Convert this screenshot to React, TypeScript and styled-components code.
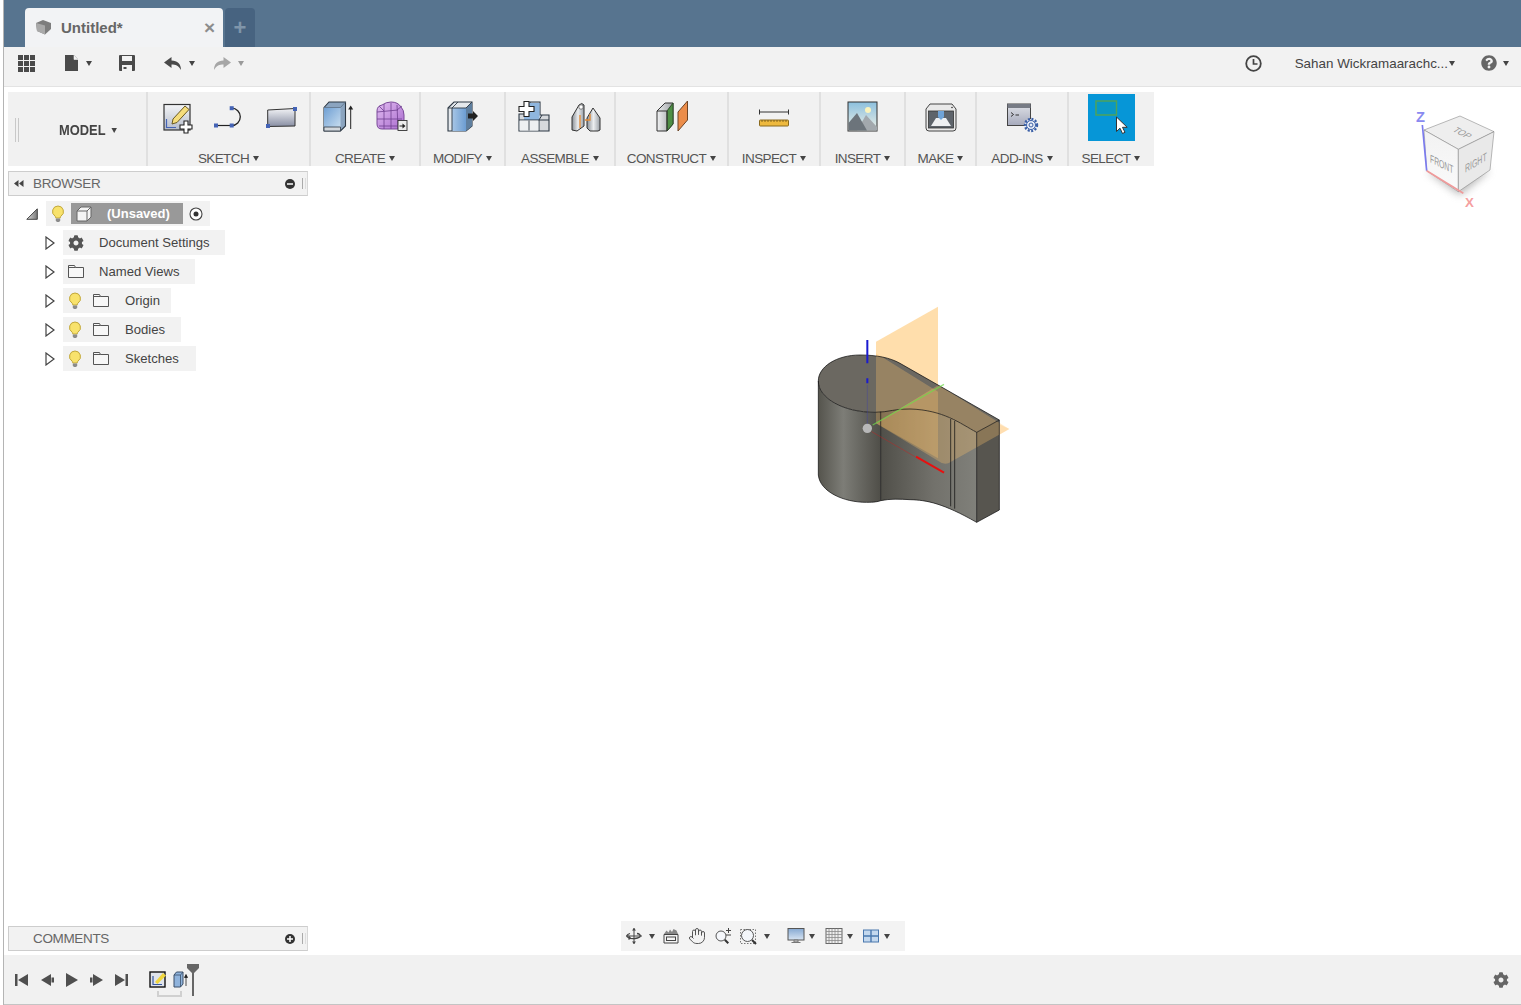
import * as React from 'react';
import styled, { createGlobalStyle } from 'styled-components';
import { FaCog, FaQuestionCircle } from 'react-icons/fa';
import { Hand } from 'lucide-react';

const GlobalStyle = createGlobalStyle`
  html, body {
    margin: 0;
    height: 100%;
    overflow: hidden;
    background: #fff;
    font-family: "Liberation Sans", Arial, sans-serif;
  }
  #root { height: 100%; }
`;

const Page = styled.div`
  display: flex;
  flex-flow: column;
  height: 1005px;
  margin-left: 3px;
  border-left: 1px solid #b4b4b4;
  box-sizing: border-box;
`;

/* title bar */
const TitleBar = styled.div`
  display: flex;
  align-items: flex-end;
  flex-shrink: 0;
  height: 47px;
  padding-left: 21px;
  background-color: #57748f;
`;
const Tab = styled.div`
  display: flex;
  align-items: center;
  width: 198px;
  height: 39px;
  box-sizing: border-box;
  padding: 0 8px 0 10px;
  background-color: #f2f3f5;
  border-radius: 4px 4px 0 0;
`;
const TabTitle = styled.span`
  flex: 1;
  margin-left: 9px;
  font-size: 15px;
  font-weight: bold;
  color: #666;
`;
const TabClose = styled.span`
  font-size: 19px;
  font-weight: bold;
  line-height: 1;
  color: #8c8c8c;
`;
const NewTab = styled.div`
  display: flex;
  align-items: center;
  justify-content: center;
  width: 30px;
  height: 39px;
  margin-left: 2px;
  background-color: #476380;
  border-radius: 4px 4px 0 0;
  color: #7f95aa;
  font-size: 22px;
  font-weight: bold;
`;

/* application bar */
const AppBar = styled.div`
  display: flex;
  align-items: center;
  flex-shrink: 0;
  height: 40px;
  box-sizing: border-box;
  padding: 0 12px 7px 0;
  background-color: #f2f2f2;
  border-bottom: 1px solid #e3e3e3;
`;
const AppItem = styled.div<{ $ml: number }>`
  display: flex;
  align-items: center;
  margin-left: ${({ $ml }) => $ml}px;
`;
const AppSpacer = styled.div`
  flex: 1;
`;
const UserName = styled.span`
  font-size: 13.4px;
  color: #444;
  white-space: nowrap;
`;
const Caret = styled.span<{ $ml?: number; $light?: boolean }>`
  display: inline-block;
  flex-shrink: 0;
  width: 0;
  height: 0;
  margin-left: ${({ $ml }) => $ml ?? 0}px;
  border-left: 3.5px solid transparent;
  border-right: 3.5px solid transparent;
  border-top: 5px solid ${({ $light }) => ($light ? '#9a9a9a' : '#444')};
`;

/* workspace */
const Workspace = styled.div`
  position: relative;
  display: flex;
  flex-flow: column;
  flex: 1;
  min-height: 0;
  padding: 5px 0 4px 4px;
`;
const Toolbar = styled.div`
  display: flex;
  align-self: flex-start;
  height: 74px;
  background-color: #f1f1f1;
`;
const ModelGroup = styled.div`
  display: flex;
  align-items: center;
  box-sizing: border-box;
  width: 140px;
  padding-left: 7px;
  border-right: 2px solid #e0e0e0;
`;
const Grip = styled.div`
  width: 2px;
  height: 24px;
  margin-top: 2px;
  border-left: 1px solid #c8c8c8;
  border-right: 1px solid #c8c8c8;
`;
const ModelLabel = styled.span`
  display: flex;
  align-items: center;
  margin: 2px 0 0 40px;
  font-size: 14px;
  font-weight: bold;
  color: #444;
  transform: scaleX(0.92);
  transform-origin: left center;
`;
const Group = styled.div<{ $w: number; $last?: boolean }>`
  display: flex;
  flex-flow: column;
  align-items: center;
  box-sizing: border-box;
  width: ${({ $w }) => $w}px;
  padding-top: 2px;
  padding-right: ${({ $last }) => ($last ? 1 : 0)}px;
  border-right: ${({ $last }) => ($last ? 'none' : '2px solid #e0e0e0')};
`;
const IconRow = styled.div`
  display: flex;
  justify-content: center;
  height: 47px;
`;
const ToolSlot = styled.div`
  display: flex;
  align-items: center;
  justify-content: center;
  width: 52px;
  height: 47px;
`;
const SelectSlot = styled.div`
  width: 47px;
  height: 47px;
  background-color: #0696d7;
`;
const GroupLabel = styled.div`
  display: flex;
  align-items: center;
  gap: 4px;
  height: 16px;
  margin-top: 9px;
  font-size: 13.5px;
  color: #555;
  letter-spacing: -0.6px;
  white-space: nowrap;
`;

/* browser */
const Panel = styled.div<{ $top?: number }>`
  display: flex;
  align-items: center;
  box-sizing: border-box;
  width: 300px;
  height: 25px;
  margin-top: ${({ $top }) => $top ?? 0}px;
  background-color: #f2f2f2;
  border: 1px solid #cdcdcd;
  border-right-color: #d8d8d8;
`;
const PanelArrows = styled.span`
  width: 24px;
  padding-left: 5px;
  box-sizing: border-box;
  display: flex;
`;
const PanelTitle = styled.span`
  flex: 1;
  padding-bottom: 1px;
  font-size: 13.5px;
  color: #666;
  letter-spacing: -0.35px;
`;
const PanelBar = styled.span`
  width: 2px;
  height: 11px;
  margin: 0 1px 0 7px;
  border-left: 1px solid #aaa;
  border-right: 1px solid #ddd;
`;
const Tree = styled.div`
  display: flex;
  flex-flow: column;
  gap: 4px;
  padding: 5px 0 0 18px;
`;
const RootRow = styled.div`
  display: flex;
  align-items: center;
  height: 25px;
`;
const RootPill = styled.div`
  display: flex;
  align-items: center;
  width: 164px;
  height: 25px;
  margin-left: 8px;
  padding-left: 5px;
  box-sizing: border-box;
  background-color: #f2f2f2;
`;
const RootName = styled.div`
  display: flex;
  align-items: center;
  width: 112px;
  height: 21px;
  margin: 0 6px;
  padding-left: 5px;
  box-sizing: border-box;
  background-color: #999;
  color: #fff;
  font-size: 13px;
  font-weight: bold;
`;
const RootText = styled.span`
  margin-left: 15px;
`;
const Row = styled.div`
  display: flex;
  align-items: center;
  height: 25px;
  padding-left: 19px;
`;
const Pill = styled.div<{ $w: number }>`
  display: flex;
  align-items: center;
  width: ${({ $w }) => $w}px;
  height: 25px;
  margin-left: 8px;
  padding-left: 5px;
  box-sizing: border-box;
  background-color: #f2f2f2;
`;
const RowFolder = styled.span`
  display: flex;
  margin-left: 11px;
`;
const RowLabel = styled.span<{ $ml: number }>`
  margin-left: ${({ $ml }) => $ml}px;
  font-size: 13.1px;
  color: #444;
  white-space: nowrap;
`;
const Footer = styled.div`
  display: flex;
  align-items: flex-end;
  margin-top: auto;
`;
const NavTools = styled.div`
  display: flex;
  align-items: center;
  width: 284px;
  height: 30px;
  margin-left: 313px;
  padding-left: 4px;
  box-sizing: border-box;
  background-color: #f3f3f3;
`;
const NavItem = styled.div<{ $ml: number }>`
  display: flex;
  flex-shrink: 0;
  margin-left: ${({ $ml }) => $ml}px;
`;

/* timeline */
const Timeline = styled.div`
  display: flex;
  align-items: center;
  flex-shrink: 0;
  height: 50px;
  box-sizing: border-box;
  padding-left: 11px;
  background-color: #f1f1f1;
  border-bottom: 1px solid #c4c4c4;
`;
const TimeItem = styled.div<{ $ml: number }>`
  display: flex;
  margin-left: ${({ $ml }) => $ml}px;
`;
const TimeFeatures = styled.div`
  position: relative;
  display: flex;
  gap: 6px;
  margin-left: 20px;

  &::after {
    content: '';
    position: absolute;
    left: 8px;
    bottom: -8px;
    width: 25px;
    height: 6px;
    box-sizing: border-box;
    border: 2px solid #d0d0d0;
    border-top: none;
  }
`;
const TimelineGear = styled.div`
  display: flex;
  margin-left: auto;
  margin-right: 12px;
  color: #666;
`;

/* canvas content */
const ModelView = styled.svg`
  position: absolute;
  left: 796px;
  top: 208px;
  width: 220px;
  height: 240px;
`;
const ViewCube = styled.svg`
  position: absolute;
  left: 1406px;
  top: 18px;
  width: 100px;
  height: 110px;
`;

const Icon = ({ children, s = 36 }: { children: React.ReactNode; s?: number }) => (
  <svg width={s} height={s} viewBox={`0 0 ${s} ${s}`}>
    {children}
  </svg>
);

const Dot = ({ x, y }: { x: number; y: number }) => (
  <rect x={x - 2} y={y - 2} width={4} height={4} fill="#4463b5" />
);

const SketchIcon = () => (
  <Icon>
    <defs>
      <linearGradient id="sk" x1="0" y1="0" x2="0" y2="1">
        <stop offset="0" stopColor="#f4f5f7" />
        <stop offset="1" stopColor="#b4bbca" />
      </linearGradient>
    </defs>
    <rect x="5" y="4.5" width="26" height="25.5" fill="url(#sk)" stroke="#333" strokeWidth="1.2" />
    <path d="M7.500 19v8.500H17" fill="none" stroke="#4463b5" strokeWidth="1.200" />
    <path d="M14 19 26 6l4 3.500L18 22.500l-5 1.500z" fill="#f5dd7c" stroke="#6a5a20" strokeWidth="1" />
    <path d="M25 21h4v4h4v4h-4v4h-4v-4h-4v-4h4z" fill="#fff" stroke="#222" strokeWidth="1.100" />
  </Icon>
);
const LineIcon = () => (
  <Icon>
    <path d="M5 25.500h15.700" stroke="#222" strokeWidth="1.200" fill="none" />
    <path d="M20.700 8.200a8.600 8.650 0 0 1 0 17.300" stroke="#222" strokeWidth="1.300" fill="none" />
    <Dot x={5} y={25.5} />
    <Dot x={20.7} y={25.5} />
    <Dot x={20.7} y={8.2} />
  </Icon>
);
const RectIcon = () => (
  <Icon>
    <defs>
      <linearGradient id="re" x1="0" y1="0" x2="0" y2="1">
        <stop offset="0" stopColor="#f2f3f6" />
        <stop offset="1" stopColor="#888ea3" />
      </linearGradient>
    </defs>
    <path d="M4.700 10 32 8.500V26L4.700 26.500z" fill="url(#re)" stroke="#333" strokeWidth="1" />
    <Dot x={32} y={9} />
    <Dot x={5} y={26} />
  </Icon>
);
const ExtrudeIcon = () => (
  <Icon>
    <defs>
      <linearGradient id="ex" x1="0" y1="0" x2="1" y2="1">
        <stop offset="0" stopColor="#6f9fd3" />
        <stop offset="1" stopColor="#c6dcef" />
      </linearGradient>
    </defs>
    <path d="M3 7.500 8 2h16.500v24l-5 5H3z" fill="#8ba4bf" stroke="#2d3844" strokeWidth="1.100" />
    <path d="M3 7.500h16.500V27H3z" fill="url(#ex)" />
    <path d="M3 7.500h16.500L24.500 2" fill="none" stroke="#5f7287" strokeWidth=".8" />
    <path d="M3 27h16.500V31H3z" fill="#d2d7dc" stroke="#2d3844" strokeWidth=".8" />
    <path d="M29.700 29V7" stroke="#222" strokeWidth="1" />
    <path d="M27.200 9.500l2.500-4 2.500 4z" fill="#222" />
  </Icon>
);
const FormIcon = () => (
  <Icon>
    <defs>
      <linearGradient id="fo" x1="0" y1="0" x2="1" y2="1">
        <stop offset="0" stopColor="#e2bdf1" />
        <stop offset="1" stopColor="#a96bce" />
      </linearGradient>
    </defs>
    <path d="M4 11q0-5 5-6 4-3 9-3 7 0 10 5 3 3 3 8v7q0 5-4 7H9q-5 0-5-5z" fill="url(#fo)" stroke="#7a4a99" strokeWidth="1" />
    <path d="M4 12 25 10M4 19h25M6 26h20M11 4v25M18 3v26M24 5l1 24M6 6l5 5M24 10l5-4" stroke="#6f3f8f" strokeWidth=".8" fill="none" />
    <rect x="25" y="20.500" width="9" height="10" fill="#ececec" stroke="#333" strokeWidth=".9" />
    <path d="M26.500 25.500h3v-2l3 2.500-3 2.500v-2h-3z" fill="#222" />
  </Icon>
);
const ModifyIcon = () => (
  <Icon>
    <defs>
      <linearGradient id="mo" x1="0" y1="0" x2="1" y2="0">
        <stop offset="0" stopColor="#a8c6e6" />
        <stop offset="1" stopColor="#6c9dd2" />
      </linearGradient>
    </defs>
    <path d="M3 8 9 2h18v24l-6 5H3z" fill="#e4e8ec" stroke="#2d3844" strokeWidth="1.100" />
    <path d="M7 8h14v23H7z" fill="url(#mo)" />
    <path d="M21 8l6-6v24l-6 5z" fill="#5f7f9f" />
    <path d="M3 8h4l6-6M7 8v23M7 8h14l6-6" fill="none" stroke="#2d3844" strokeWidth=".9" />
    <path d="M23 13.500h5V11l5 5-5 5v-2.500h-5z" fill="#222" />
  </Icon>
);
const AssembleIcon = () => (
  <Icon>
    <path d="M14 2h10v13h9v16H3V14h11z" fill="#d6d9dd" stroke="#2d3844" strokeWidth="1.100" />
    <rect x="8" y="3" width="15.500" height="17" fill="#8fb6df" />
    <path d="M3 20h20v11M23 20l3-5M23 20h10" stroke="#2d3844" strokeWidth="1" fill="none" />
    <rect x="3.600" y="20.600" width="18.800" height="10" fill="#eef0f2" />
    <path d="M13 20.500v10" stroke="#2d3844" strokeWidth=".9" />
    <path d="M8 1.500h5v5h5v5h-5v5H8v-5H3v-5h5z" fill="#fff" stroke="#222" strokeWidth="1.100" />
  </Icon>
);
const JointIcon = () => (
  <Icon>
    <defs>
      <linearGradient id="jo" x1="0" y1="0" x2="1" y2="0">
        <stop offset="0" stopColor="#8a8f96" />
        <stop offset=".5" stopColor="#eceef0" />
        <stop offset="1" stopColor="#9aa0a7" />
      </linearGradient>
    </defs>
    <path d="M4 30V17l7-12q3-3 5 0v21l-7 5z" fill="url(#jo)" stroke="#333" strokeWidth="1" />
    <path d="M19 18 25 8l7 10v12l-2 1h-8l-3-3z" fill="url(#jo)" stroke="#333" strokeWidth="1" />
    <path d="M12 15v13M22 14v6h-5" stroke="#e58a32" strokeWidth="1.300" fill="none" />
    <circle cx="13" cy="7" r="2.200" fill="#fff" stroke="#555" strokeWidth=".7" />
  </Icon>
);
const ConstructIcon = () => (
  <Icon>
    <defs>
      <linearGradient id="co" x1="0" y1="0" x2="1" y2="0">
        <stop offset="0" stopColor="#f0f1f2" />
        <stop offset="1" stopColor="#9b9fa3" />
      </linearGradient>
    </defs>
    <path d="M3 11 11 3h8v21l-6 7H3z" fill="url(#co)" stroke="#333" strokeWidth="1" />
    <path d="M13 11 19 3v21l-6 7z" fill="#4e8f45" stroke="#2e4c2a" strokeWidth="1" />
    <path d="M3 11h10v20" fill="none" stroke="#333" strokeWidth="1" />
    <path d="M24 12 33.500 1v19L24 31z" fill="#ec8d4a" stroke="#6d4426" strokeWidth="1" />
  </Icon>
);
const InspectIcon = () => (
  <Icon>
    <path d="M3.500 12h29M3.500 9.500v5M32.500 9.500v5" stroke="#333" strokeWidth="1" fill="none" />
    <rect x="3.500" y="20" width="29" height="6" rx=".8" fill="#eeb93e" stroke="#8a6a1e" strokeWidth="1" />
    <path d="M6 20v2M9 20v2M12 20v2M15 20v2M18 20v2M21 20v2M24 20v2M27 20v2M30 20v2" stroke="#6d5416" strokeWidth=".8" />
  </Icon>
);
const InsertIcon = () => (
  <Icon>
    <defs>
      <linearGradient id="in" x1="0" y1="0" x2="0" y2="1">
        <stop offset="0" stopColor="#8cc0de" />
        <stop offset="1" stopColor="#eef0e6" />
      </linearGradient>
    </defs>
    <rect x="3" y="2" width="29" height="29" fill="url(#in)" stroke="#333" strokeWidth="1" />
    <circle cx="23" cy="10" r="3" fill="#fbf4bd" />
    <path d="M21 15l11 12v3.500H12z" fill="#a2a8ad" />
    <path d="M3.500 23 12 13 22 30.500H3.500z" fill="#6c747b" />
  </Icon>
);
const MakeIcon = () => (
  <Icon>
    <path d="M3 9 7 4h22l4 5v19q0 3-3 3H6q-3 0-3-3z" fill="#e9e9e9" stroke="#444" strokeWidth="1" />
    <rect x="5.500" y="11" width="25" height="17" fill="#5e646b" stroke="#333" strokeWidth=".8" />
    <path d="M8 26 13 18h10l5 8z" fill="#eef0f2" />
    <path d="M15 11h6v6l-3 3-3-3z" fill="#6fa3d7" />
    <circle cx="29" cy="7.500" r=".8" fill="#333" />
  </Icon>
);
const AddInsIcon = () => (
  <Icon>
    <defs>
      <linearGradient id="ad" x1="0" y1="0" x2="0" y2="1">
        <stop offset="0" stopColor="#dfe1e7" />
        <stop offset="1" stopColor="#a6aabc" />
      </linearGradient>
    </defs>
    <rect x="3.500" y="4" width="23" height="21.500" fill="url(#ad)" stroke="#444" strokeWidth="1" />
    <rect x="3.500" y="4" width="23" height="4" fill="#777b85" />
    <path d="M7 12.500l2.500 2-2.500 2M11.500 15h3.500" stroke="#222" strokeWidth=".9" fill="none" />
    <circle cx="27" cy="25" r="6" fill="#e9eef8" stroke="#3a5fa6" strokeWidth="2.400" strokeDasharray="2 1.500" />
    <circle cx="27" cy="25" r="4.500" fill="#e9eef8" stroke="#3a5fa6" strokeWidth="1" />
    <circle cx="27" cy="25" r="2" fill="none" stroke="#3a5fa6" strokeWidth="1" />
  </Icon>
);
const SelectIcon = () => (
  <svg width={47} height={47} viewBox="0 0 47 47">
    <rect x="8" y="7" width="20.500" height="14" fill="#0a97c4" stroke="#4ea35a" strokeWidth="1.500" />
    <path d="M28.500 23v14.500l3.500-3.300 2.500 5.300 2.500-1.200-2.500-5h4.700z" fill="#fff" stroke="#333" strokeWidth="1" />
  </svg>
);

const Bulb = () => (
  <svg width={14} height={18} viewBox="0 0 14 18">
    <path d="M7 1a5.500 5.500 0 0 0-3 10.100c.6.500.8 1 .8 1.900h4.400c0-.9.200-1.400.8-1.900A5.500 5.500 0 0 0 7 1z" fill="#f8e26c" stroke="#c2a83a" strokeWidth="1" />
    <path d="M4.800 13.500h4.400v2l-1 1.500H5.800l-1-1.500z" fill="#8b8b8b" />
  </svg>
);
const Folder = () => (
  <svg width={16} height={13} viewBox="0 0 16 13">
    <path d="M.500 12.500V.500h6l1 2h8v10z M.500 2.500h7" fill="#f7f7f7" stroke="#555" strokeWidth="1" />
  </svg>
);
const Expand = () => (
  <svg width={10} height={14} viewBox="0 0 10 14">
    <path d="M1 1v12l8-6z" fill="#fff" stroke="#444" strokeWidth="1.200" />
  </svg>
);
const Collapse = () => (
  <svg width={12} height={12} viewBox="0 0 12 12">
    <defs>
      <linearGradient id="col" x1="0" y1="0" x2="1" y2="0">
        <stop offset="0" stopColor="#ddd" />
        <stop offset="1" stopColor="#777" />
      </linearGradient>
    </defs>
    <path d="M.800 11.300 11.300.800v10.500z" fill="url(#col)" stroke="#444" strokeWidth="1" />
  </svg>
);
const Rewind = () => (
  <svg width={10} height={7} viewBox="0 0 10 7">
    <path d="M0 3.500 4.500 0v7zM5 3.500 9.500 0v7z" fill="#444" />
  </svg>
);
const RoundMark = ({ plus }: { plus?: boolean }) => (
  <svg width={10} height={10} viewBox="0 0 10 10">
    <circle cx="5" cy="5" r="5" fill="#333" />
    <path d={plus ? 'M2 5h6M5 2v6' : 'M2 5h6'} stroke="#fff" strokeWidth="1.500" />
  </svg>
);

const AppsIcon = () => (
  <svg width={17} height={17} viewBox="0 0 17 17" fill="#4a4a4a">
    {[0, 6, 12].map(y =>
      [0, 6, 12].map(x => <rect key={`${x}-${y}`} x={x} y={y} width={5} height={5} />)
    )}
  </svg>
);
const FileIcon = () => (
  <svg width={14} height={16} viewBox="0 0 14 16">
    <path d="M0 0h9l4 4.500V16H0z" fill="#4a4a4a" />
    <path d="M9 0v4.500h4" fill="#f2f2f2" stroke="#f2f2f2" strokeWidth=".6" />
  </svg>
);
const SaveIcon = () => (
  <svg width={16} height={16} viewBox="0 0 16 16">
    <path d="M0 1q0-1 1-1h14q1 0 1 1v14q0 1-1 1H1q-1 0-1-1z" fill="#4a4a4a" />
    <rect x="3" y="1" width="10" height="5" fill="#f2f2f2" />
    <rect x="3" y="10" width="10" height="6" fill="#f2f2f2" />
    <rect x="4.500" y="12" width="3" height="2" fill="#4a4a4a" />
  </svg>
);
const UndoIcon = ({ redo }: { redo?: boolean }) => (
  <svg width={18} height={13} viewBox="0 0 18 13">
    <path
      d="M7.500 0 0 5.500 7.500 11V7.500c4 0 7 .8 9.500 5.500 0-6-3.500-9.500-9.500-9.500z"
      fill={redo ? '#a6a6a6' : '#4a4a4a'}
      transform={redo ? 'matrix(-1 0 0 1 18 0)' : undefined}
    />
  </svg>
);
const ClockIcon = () => (
  <svg width={17} height={17} viewBox="0 0 17 17">
    <circle cx="8.500" cy="8.500" r="7.300" fill="none" stroke="#444" strokeWidth="1.800" />
    <path d="M8.500 4v5h4" fill="none" stroke="#444" strokeWidth="1.700" />
  </svg>
);
const TabCube = () => (
  <svg width={17} height={15} viewBox="0 0 17 15">
    <path d="M1 3 8 0l8 3v6l-6 5.500L2 11z" fill="#7d7d7d" />
    <path d="M1 3 10 5.500v9L2 11z" fill="#a9a9a9" />
  </svg>
);
const RootCube = () => (
  <svg width={16} height={16} viewBox="0 0 16 16">
    <path d="M1 5 5 1h10v10l-4 4H1z" fill="#f4f4f4" stroke="#666" strokeWidth="1" />
    <path d="M1 5h10v10M11 5l4-4" fill="none" stroke="#666" strokeWidth="1" />
  </svg>
);
const Target = () => (
  <svg width={14} height={14} viewBox="0 0 14 14">
    <circle cx="7" cy="7" r="6" fill="#fff" stroke="#444" strokeWidth="1.100" />
    <circle cx="7" cy="7" r="2.500" fill="#333" />
  </svg>
);

const OrbitIcon = () => (
  <svg width={18} height={18} viewBox="0 0 18 18">
    <path d="M9 1v16M1 9h16" stroke="#444" strokeWidth="1" />
    <path d="M7 3.500 9 1l2 2.500zM7 14.500 9 17l2-2.500z" fill="#444" />
    <path d="M12 6.500c4 .5 4.500 3.500.5 4.500-3 .8-7 .8-9-.3C1 9.500 1.500 7.500 5 6.500" fill="none" stroke="#444" strokeWidth="1.300" />
    <path d="M3.500 8v5l3-1.500z" fill="#444" />
  </svg>
);
const LookIcon = () => (
  <svg width={18} height={18} viewBox="0 0 18 18">
    <path d="M2 7.500h14V16H2z" fill="#f4f4f4" stroke="#444" strokeWidth="1" />
    <rect x="4.500" y="10" width="9" height="3.500" fill="none" stroke="#444" strokeWidth="1" />
    <path d="M2 7 4.500 3.500l2 2 1.500-3 2 2.500 1.500-3 3 1.500L16 7z" fill="#888" />
  </svg>
);
const ZoomIcon = () => (
  <svg width={18} height={18} viewBox="0 0 18 18">
    <circle cx="7" cy="9" r="5" fill="#f5f7fb" stroke="#555" strokeWidth="1" />
    <path d="m10.800 12.800 3.500 3.500" stroke="#333" strokeWidth="2" />
    <path d="M12 3.500h5M14.500 1v5M12 8h5" stroke="#444" strokeWidth="1" />
  </svg>
);
const FitIcon = () => (
  <svg width={18} height={18} viewBox="0 0 18 18">
    <path d="M.500 2.500h15v14H.500z" fill="none" stroke="#777" strokeWidth="1" strokeDasharray="1.500 1.500" />
    <circle cx="7.500" cy="8.500" r="6" fill="#f3f6fa" stroke="#555" strokeWidth="1" />
    <path d="m12 13 4 4" stroke="#333" strokeWidth="2" />
  </svg>
);
const DisplayIcon = () => (
  <svg width={18} height={18} viewBox="0 0 18 18">
    <defs>
      <linearGradient id="di" x1="0" y1="0" x2="0" y2="1">
        <stop offset="0" stopColor="#86a9d2" />
        <stop offset="1" stopColor="#d7e4f2" />
      </linearGradient>
    </defs>
    <rect x="1" y="1.500" width="16" height="11.500" fill="url(#di)" stroke="#555" strokeWidth="1" />
    <path d="M7 13h4v2H7zM4.500 15.500h9" stroke="#777" strokeWidth="1" fill="#ccc" />
  </svg>
);
const GridIcon = () => (
  <svg width={18} height={18} viewBox="0 0 18 18">
    <rect x="1" y="1.500" width="16" height="15" fill="#eee" stroke="#666" strokeWidth="1" />
    <path d="M4 1.500v15M7 1.500v15M10 1.500v15M13 1.500v15M1 4.500h16M1 7.500h16M1 10.500h16M1 13.500h16" stroke="#8a8a8a" strokeWidth=".8" />
  </svg>
);
const ViewportIcon = () => (
  <svg width={18} height={18} viewBox="0 0 18 18">
    <rect x="1.500" y="3" width="15" height="12" fill="#c3d8ee" stroke="#4a78ae" strokeWidth="1" />
    <path d="M9 3v12M1.500 9h15" stroke="#4a78ae" strokeWidth="1.400" />
  </svg>
);

const Transport = ({ d }: { d: string }) => (
  <svg width={14} height={16} viewBox="0 0 14 16">
    <path d={d} fill="#4f4f4f" />
  </svg>
);
const TimeSketch = () => (
  <svg width={18} height={18} viewBox="0 0 18 18">
    <rect x="1" y="1" width="15" height="15" fill="#dfe3ea" stroke="#111" strokeWidth="1.400" />
    <path d="M4 5v8.500h9" stroke="#35569e" strokeWidth="1.200" fill="none" />
    <path d="M6 11 14 2l3 2.500L8.500 13z" fill="#f0d63d" />
  </svg>
);
const TimeExtrude = () => (
  <svg width={15} height={17} viewBox="0 0 15 17">
    <path d="M1 4 3.500 1H10v12l-2.500 3H1z" fill="#8fb3dc" stroke="#3a4f68" strokeWidth="1" />
    <path d="M1 4h6.500v12M7.500 4 10 1" fill="none" stroke="#3a4f68" strokeWidth=".8" />
    <path d="M13 15V5M11.500 6.500 13 3.500l1.500 3z" stroke="#222" strokeWidth=".8" fill="#222" />
  </svg>
);
const TimeMarker = () => (
  <svg width={12} height={32} viewBox="0 0 12 32">
    <path d="M0 0h12v4L7 9v23H5V9L0 4z" fill="#666" />
  </svg>
);

const ModelDrawing = () => (
  <ModelView viewBox="0 0 660 720">
    <defs>
      <linearGradient id="wallA" x1="0" y1="0" x2="1" y2="0">
        <stop offset="0" stopColor="#55544d" />
        <stop offset=".4" stopColor="#7d7d77" />
        <stop offset="1" stopColor="#4f4e48" />
      </linearGradient>
      <linearGradient id="wallB" x1="0" y1="0" x2="1" y2="0">
        <stop offset="0" stopColor="#504f49" />
        <stop offset=".55" stopColor="#72716b" />
        <stop offset="1" stopColor="#80807a" />
      </linearGradient>
    </defs>
    <path d="M228 140 414 35V270L228 385z" fill="#ffa726" opacity=".38" />
    <path d="M55 258v282c5 50 75 82 145 82 20 0 35-2 42-5V350c-10 2-10 2-17 2C130 352 55 310 55 258z" fill="url(#wallA)" />
    <path d="M242 350c25-8 50-8 88-8 100 3 150 43 200 70v270c-100-57-150-67-200-68-30-2-60-3-88 3z" fill="url(#wallB)" />
    <path d="M530 412 598 375V645L530 682z" fill="#57554f" />
    <path d="M55 258C55 215 110 180 180 180 230 180 270 188 300 205L598 375 530 412C480 385 430 345 330 342 290 340 265 352 225 352 130 352 55 310 55 258z" fill="#6b6861" />
    <path d="M228 175 414 290V490L228 385z" fill="#ffc46a" opacity=".3" />
    <path d="M228 385 415 270 628 402 445 505Q430 510 415 498z" fill="#ffc46a" opacity=".3" />
    <path d="M598 388 628 402 598 419z" fill="#ffa726" opacity=".2" />
    <g fill="none" stroke="#111" strokeWidth="2.200">
      <path d="M55 258C55 215 110 180 180 180 230 180 270 188 300 205L598 375 530 412C480 385 430 345 330 342 290 340 265 352 225 352 130 352 55 310 55 258z" />
      <path d="M55 258v282c5 50 75 82 145 82 20 0 35-2 42-5 28-6 58-5 88-3 50 1 100 11 200 68l68-37V375" />
      <path d="M242 350V617M452 372V634M464 378V641M530 412V682" />
    </g>
    <path d="M202 135V205M202 250V265" stroke="#1a1ad0" strokeWidth="6" />
    <path d="M202 270V390" stroke="#3a3ab0" strokeWidth="3" opacity=".35" />
    <path d="M218 390 432 268" stroke="#6fdc4a" strokeWidth="4" opacity=".7" />
    <path d="M215 410 345 485" stroke="#d81818" strokeWidth="2.500" opacity=".45" />
    <path d="M348 485 432 533" stroke="#e81010" strokeWidth="6" />
    <circle cx="202" cy="400" r="14" fill="#b8b8b8" />
  </ModelView>
);

const CubeDrawing = () => (
  <ViewCube viewBox="540 195 300 330">
    <defs>
      <filter id="cubeShadow" x="-30%" y="-30%" width="160%" height="160%">
        <feGaussianBlur stdDeviation="12" />
      </filter>
      <linearGradient id="cubeFace" x1="0" y1="0" x2="0" y2="1">
        <stop offset="0" stopColor="#f2f2f2" />
        <stop offset="1" stopColor="#fafafa" />
      </linearGradient>
    </defs>
    <path d="M590 392 780 390 690 465z" fill="#777" opacity=".55" filter="url(#cubeShadow)" />
    <path d="M582 270 690 228 792 275 685 328z" fill="#eee" stroke="#777" strokeWidth="1.500" />
    <path d="M582 270 685 328V455L590 392z" fill="url(#cubeFace)" stroke="#777" strokeWidth="1.500" />
    <path d="M685 328 792 275 780 390 685 455z" fill="#e9e9e9" stroke="#777" strokeWidth="1.500" />
    <path d="M577 255 590 392" stroke="#7a7aee" strokeWidth="5" />
    <path d="M590 392 700 460" stroke="#f09a9a" strokeWidth="5" />
    <g fontFamily="'Liberation Sans', Arial, sans-serif" fill="#999">
      <text fontSize="26" transform="translate(665 272) rotate(28) skewX(-28)">TOP</text>
      <text fontSize="34" transform="translate(600 367) skewY(26) scale(.6 1)">FRONT</text>
      <text fontSize="34" transform="translate(705 398) skewY(-30) scale(.615 1)">RIGHT</text>
    </g>
    <text x="558" y="246" fontSize="44" fontWeight="bold" fontFamily="'Liberation Sans', Arial, sans-serif" fill="#8a8af0">Z</text>
    <text x="705" y="500" fontSize="40" fontWeight="bold" fontFamily="'Liberation Sans', Arial, sans-serif" fill="#f5a0a0">X</text>
  </ViewCube>
);

const groups = [
  { label: 'SKETCH', w: 163, icons: [SketchIcon, LineIcon, RectIcon] },
  { label: 'CREATE', w: 110, icons: [ExtrudeIcon, FormIcon] },
  { label: 'MODIFY', w: 85, icons: [ModifyIcon] },
  { label: 'ASSEMBLE', w: 110, icons: [AssembleIcon, JointIcon] },
  { label: 'CONSTRUCT', w: 113, icons: [ConstructIcon] },
  { label: 'INSPECT', w: 92, icons: [InspectIcon] },
  { label: 'INSERT', w: 85, icons: [InsertIcon] },
  { label: 'MAKE', w: 71, icons: [MakeIcon] },
  { label: 'ADD-INS', w: 92, icons: [AddInsIcon] },
];

const treeItems = [
  { label: 'Origin', w: 108 },
  { label: 'Bodies', w: 118 },
  { label: 'Sketches', w: 133 },
];

export default function App() {
  return (
    <Page>
      <GlobalStyle />
      <TitleBar>
        <Tab>
          <TabCube />
          <TabTitle>Untitled*</TabTitle>
          <TabClose>×</TabClose>
        </Tab>
        <NewTab>+</NewTab>
      </TitleBar>

      <AppBar>
        <AppItem $ml={14}><AppsIcon /></AppItem>
        <AppItem $ml={30}><FileIcon /><Caret $ml={7} /></AppItem>
        <AppItem $ml={27}><SaveIcon /></AppItem>
        <AppItem $ml={29}><UndoIcon /><Caret $ml={7} /></AppItem>
        <AppItem $ml={18}><UndoIcon redo /><Caret $ml={7} $light /></AppItem>
        <AppSpacer />
        <AppItem $ml={0}><ClockIcon /></AppItem>
        <AppItem $ml={33}><UserName>Sahan Wickramaarachc...</UserName><Caret $ml={1} /></AppItem>
        <AppItem $ml={26}>
          <FaQuestionCircle size={16} color="#666" />
          <Caret $ml={6} />
        </AppItem>
      </AppBar>

      <Workspace>
        <ModelDrawing />
        <CubeDrawing />
        <Toolbar>
          <ModelGroup>
            <Grip />
            <ModelLabel>MODEL<Caret $ml={6} /></ModelLabel>
          </ModelGroup>
          {groups.map(g => (
            <Group key={g.label} $w={g.w}>
              <IconRow>
                {g.icons.map((Ic, i) => (
                  <ToolSlot key={i}><Ic /></ToolSlot>
                ))}
              </IconRow>
              <GroupLabel>{g.label}<Caret /></GroupLabel>
            </Group>
          ))}
          <Group $w={85} $last>
            <IconRow>
              <SelectSlot><SelectIcon /></SelectSlot>
            </IconRow>
            <GroupLabel>SELECT<Caret /></GroupLabel>
          </Group>
        </Toolbar>

        <Panel $top={5}>
          <PanelArrows><Rewind /></PanelArrows>
          <PanelTitle>BROWSER</PanelTitle>
          <RoundMark />
          <PanelBar />
        </Panel>
        <Tree>
          <RootRow>
            <Collapse />
            <RootPill>
              <Bulb />
              <RootName>
                <RootCube />
                <RootText>(Unsaved)</RootText>
              </RootName>
              <Target />
            </RootPill>
          </RootRow>
          <Row>
            <Expand />
            <Pill $w={162}>
              <FaCog size={16} color="#555" />
              <RowLabel $ml={15}>Document Settings</RowLabel>
            </Pill>
          </Row>
          <Row>
            <Expand />
            <Pill $w={132}>
              <Folder />
              <RowLabel $ml={15}>Named Views</RowLabel>
            </Pill>
          </Row>
          {treeItems.map(t => (
            <Row key={t.label}>
              <Expand />
              <Pill $w={t.w}>
                <Bulb />
                <RowFolder><Folder /></RowFolder>
                <RowLabel $ml={16}>{t.label}</RowLabel>
              </Pill>
            </Row>
          ))}
        </Tree>

        <Footer>
          <Panel>
            <PanelArrows />
            <PanelTitle>COMMENTS</PanelTitle>
            <RoundMark plus />
            <PanelBar />
          </Panel>
          <NavTools>
            <NavItem $ml={0}><OrbitIcon /></NavItem>
            <NavItem $ml={6}><Caret /></NavItem>
            <NavItem $ml={7}><LookIcon /></NavItem>
            <NavItem $ml={8}><Hand size={18} strokeWidth={1.2} color="#444" /></NavItem>
            <NavItem $ml={8}><ZoomIcon /></NavItem>
            <NavItem $ml={8}><FitIcon /></NavItem>
            <NavItem $ml={6}><Caret /></NavItem>
            <NavItem $ml={17}><DisplayIcon /></NavItem>
            <NavItem $ml={4}><Caret /></NavItem>
            <NavItem $ml={10}><GridIcon /></NavItem>
            <NavItem $ml={4}><Caret /></NavItem>
            <NavItem $ml={9}><ViewportIcon /></NavItem>
            <NavItem $ml={4}><Caret /></NavItem>
          </NavTools>
        </Footer>
      </Workspace>

      <Timeline>
        <TimeItem $ml={0}><Transport d="M0 2h2.500v12H0zM13 2v12L3 8z" /></TimeItem>
        <TimeItem $ml={11}><Transport d="M11 2v12L1 8zM11.500 5.500H14v5h-2.500z" /></TimeItem>
        <TimeItem $ml={11}><Transport d="M1 1v14l12-7z" /></TimeItem>
        <TimeItem $ml={11}><Transport d="M3 2v12l10-6zM0 5.500h2.500v5H0z" /></TimeItem>
        <TimeItem $ml={11}><Transport d="M0 2v12l10-6zM10.500 2H13v12h-2.500z" /></TimeItem>
        <TimeFeatures>
          <TimeSketch />
          <TimeExtrude />
        </TimeFeatures>
        <TimeItem $ml={-1}><TimeMarker /></TimeItem>
        <TimelineGear><FaCog size={16} /></TimelineGear>
      </Timeline>
    </Page>
  );
}
